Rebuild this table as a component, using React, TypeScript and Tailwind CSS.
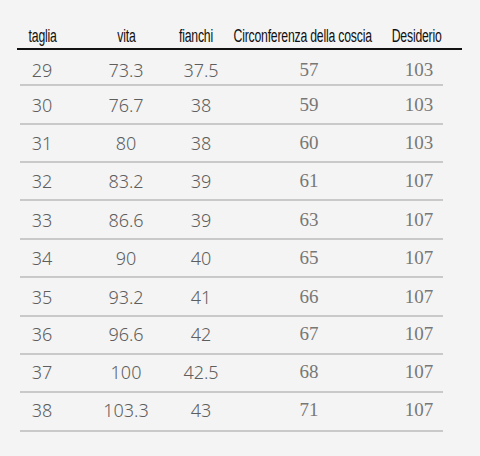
import React from "react";

const rows: [string, string, string, string, string][] = [
  ["29", "73.3", "37.5", "57", "103"],
  ["30", "76.7", "38", "59", "103"],
  ["31", "80", "38", "60", "103"],
  ["32", "83.2", "39", "61", "107"],
  ["33", "86.6", "39", "63", "107"],
  ["34", "90", "40", "65", "107"],
  ["35", "93.2", "41", "66", "107"],
  ["36", "96.6", "42", "67", "107"],
  ["37", "100", "42.5", "68", "107"],
  ["38", "103.3", "43", "71", "107"],
];

const rowH = [
  "h-[36px] pt-[5px]",
  "h-[39px] pt-[1px]",
  "h-[38px]",
  "h-[38px]",
  "h-[39px]",
  "h-[38px]",
  "h-[39px]",
  "h-[38px] pb-[2px]",
  "h-[38px] pb-[3px]",
  "h-[39px] pb-[4px]",
];

const headers = ["taglia", "vita", "fianchi", "Circonferenza della coscia", "Desiderio"];

export default function App() {
  return (
    <div className="w-[480px] h-[456px] bg-[#f4f4f4] overflow-hidden">
      <div className="ml-[17px] w-[445px] pt-[26px] pb-[2px] border-b-2 border-[#111] grid grid-cols-[51px_116px_24px_190px_38px_26px] font-['Liberation_Sans',Arial,sans-serif] text-[18px] leading-[20px] text-[#111]">
        {headers.map((h) => (
          <div key={h} className="flex justify-center whitespace-nowrap">
            <span className="inline-block scale-x-[0.68] tracking-[-0.3px]">{h}</span>
          </div>
        ))}
      </div>
      <div className="ml-[20px] w-[423px]">
        {rows.map((r, i) => (
          <div
            key={i}
            className={`${rowH[i]} border-b-2 border-[#c9c9c9] grid grid-cols-[44px_124px_26px_190px_30px_9px] items-center`}
          >
            <div className="flex justify-center whitespace-nowrap font-['Noto_Sans',sans-serif] font-light text-[18px] leading-[24px] text-[#5e5e5e]">{r[0]}</div>
            <div className="flex justify-center whitespace-nowrap font-['Noto_Sans',sans-serif] font-light text-[18px] leading-[24px] text-[#5e5e5e]">{r[1]}</div>
            <div className="flex justify-center whitespace-nowrap font-['Noto_Sans',sans-serif] font-light text-[18px] leading-[24px] text-[#5e5e5e]">{r[2]}</div>
            <div className="flex justify-center whitespace-nowrap font-['Liberation_Serif',serif] text-[19px] leading-[24px] text-[#777]">{r[3]}</div>
            <div className="flex justify-center whitespace-nowrap font-['Liberation_Serif',serif] text-[19px] leading-[24px] text-[#777]">{r[4]}</div>
            <div />
          </div>
        ))}
      </div>
    </div>
  );
}
